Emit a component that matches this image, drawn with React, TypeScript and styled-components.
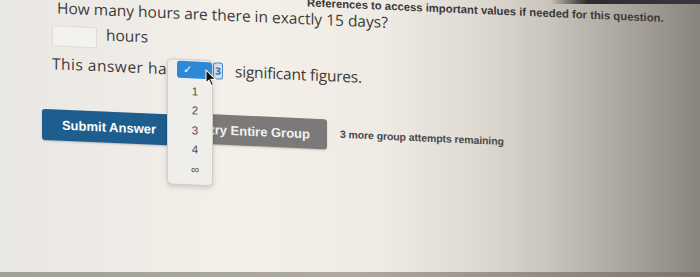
import React from 'react';
import styled, {createGlobalStyle} from 'styled-components';

const GlobalStyle = createGlobalStyle`
  html, body {
    margin: 0;
    padding: 0;
    width: 700px;
    height: 277px;
    overflow: hidden;
  }
  body {
    font-family: "Open Sans", "Liberation Sans", sans-serif;
  }
`;

const Screen = styled.div`
  width: 700px;
  height: 277px;
  overflow: hidden;
  display: flex;
  flex-direction: column;
  background: linear-gradient(90deg, #e9e7e3 0%, #efece7 18%, #f4f0e9 36%, #efebe4 55%, #dedad2 68%, #cbc6bd 78%, #aca79e 89%, #8a857c 100%);
`;

const TopBand = styled.div`
  height: 4px;
  display: flex;
  justify-content: flex-end;
`;

const TopBandDark = styled.div`
  width: 150px;
  background: linear-gradient(90deg, rgba(40, 38, 42, 0) 0%, #2f2c30 25%, #3a3640 100%);
`;

/* the photo is taken at an angle: rows fall to the right, verticals stay upright */
const Content = styled.div`
  flex: 1 1 auto;
  display: flex;
  flex-direction: column;
  padding-left: 52px;
  transform: skewY(2.5deg);
  transform-origin: 0 0;
  color: #3a3a3a;
`;

const Notice = styled.div`
  margin-top: -21px;
  padding-left: 255px;
  height: 13px;
  line-height: 13px;
  font-family: "Liberation Sans", sans-serif;
  font-size: 11.3px;
  font-weight: bold;
  color: #3a3a3a;
  white-space: nowrap;
`;

const Question = styled.div`
  margin-top: -1px;
  padding-left: 5px;
  line-height: 20px;
  font-size: 15.5px;
  white-space: nowrap;
`;

const AnswerRow = styled.div`
  display: flex;
  align-items: flex-start;
  gap: 9px;
  margin-top: 8px;
`;

const Input = styled.div`
  width: 45px;
  height: 21px;
  box-sizing: border-box;
  border: 1px solid #dedcd8;
  border-radius: 2px;
  background: #f4f2ee;
`;

const Unit = styled.span`
  margin-top: -4px;
  line-height: 22px;
  font-size: 15.5px;
`;

const SigRow = styled.div`
  display: flex;
  align-items: center;
  height: 22px;
  margin-top: 6px;
  line-height: 22px;
  font-size: 15.5px;
  white-space: nowrap;
`;

const Clip = styled.span`
  width: 121px;
  overflow: hidden;
  letter-spacing: 0.5px;
`;

const SelectWrap = styled.span`
  position: relative;
  display: inline-flex;
  align-items: center;
  gap: 1px;
  margin-left: 4px;
`;

const Select = styled.span`
  width: 35px;
  height: 17px;
  display: flex;
  align-items: center;
  padding-left: 6px;
  box-sizing: border-box;
  background: #2e88d9;
  border-radius: 3px;
  color: #fff;
  font-size: 11px;
  z-index: 2;
`;

const Badge = styled.span`
  width: 10px;
  height: 17px;
  box-sizing: border-box;
  display: flex;
  align-items: center;
  justify-content: center;
  border: 1px solid #4f88c6;
  border-radius: 3px;
  background: #cfe0f2;
  color: #2f68a8;
  font-size: 10px;
  font-weight: bold;
`;

const Tail = styled.span`
  margin-left: 12px;
  letter-spacing: -0.2px;
`;

const Menu = styled.div`
  position: absolute;
  left: -10px;
  top: -2px;
  width: 46px;
  height: 126px;
  box-sizing: border-box;
  padding: 22px 0 0 10px;
  display: flex;
  flex-direction: column;
  align-items: center;
  background: #f0eeea;
  border: 1px solid #d2cfca;
  border-radius: 5px;
  box-shadow: 0 2px 5px rgba(0, 0, 0, 0.16);
  z-index: 1;
`;

const MenuItem = styled.div`
  height: 19.5px;
  line-height: 19.5px;
  font-family: "Liberation Sans", sans-serif;
  font-size: 11.5px;
  color: #4e4e4e;
`;

const Cursor = styled.svg`
  position: absolute;
  left: 28px;
  top: 7px;
  z-index: 3;
`;

const ButtonRow = styled.div`
  display: flex;
  align-items: flex-start;
  margin-top: 33px;
  margin-left: -10px;
  font-family: "Liberation Sans", sans-serif;
`;

const Button = styled.div<{$tone: 'primary' | 'muted'}>`
  height: 31px;
  display: flex;
  align-items: center;
  justify-content: center;
  border-radius: 3px;
  font-size: 13px;
  font-weight: bold;
  color: ${p => (p.$tone === 'primary' ? '#fff' : '#f1f1f1')};
  background: ${p => (p.$tone === 'primary' ? '#1d5e8e' : '#7c7a78')};
  box-shadow: 0 1px 2px rgba(0, 0, 0, 0.2);
`;

const Submit = styled(Button)`
  width: 128px;
  margin-top: 2px;
  padding-left: 6px;
  box-sizing: border-box;
`;

const Retry = styled(Button)`
  width: 127px;
  height: 30px;
  margin-left: 30px;
  justify-content: flex-end;
  padding-right: 17px;
  box-sizing: border-box;
  overflow: hidden;
  white-space: nowrap;
`;

const Attempts = styled.span`
  align-self: center;
  margin: 0 0 5px 13px;
  font-size: 10.5px;
  font-weight: bold;
  letter-spacing: -0.1px;
  color: #484848;
`;

const BottomEdge = styled.div`
  height: 5px;
  background: linear-gradient(90deg, #a29e98 0%, #aeaaa3 50%, #7a756d 100%);
`;

export default function App() {
  return (
    <Screen>
      <GlobalStyle/>
      <TopBand><TopBandDark/></TopBand>
      <Content>
        <Notice>References to access important values if needed for this question.</Notice>
        <Question>How many hours are there in exactly 15 days?</Question>
        <AnswerRow>
          <Input/>
          <Unit>hours</Unit>
        </AnswerRow>
        <SigRow>
          <Clip>This answer has</Clip>
          <SelectWrap>
            <Select>✓</Select>
            <Badge>3</Badge>
            <Menu>
              {['1', '2', '3', '4', '∞'].map(v => <MenuItem key={v}>{v}</MenuItem>)}
            </Menu>
            <Cursor width="12" height="18" viewBox="0 0 12 18">
              <path d="M1 1 L1 14 L4 11 L6.5 16.5 L8.5 15.5 L6 10 L10.5 10 Z" fill="#111" stroke="#fff" strokeWidth="1"/>
            </Cursor>
          </SelectWrap>
          <Tail>significant figures.</Tail>
        </SigRow>
        <ButtonRow>
          <Submit $tone="primary">Submit Answer</Submit>
          <Retry $tone="muted">Retry Entire Group</Retry>
          <Attempts>3 more group attempts remaining</Attempts>
        </ButtonRow>
      </Content>
      <BottomEdge/>
    </Screen>
  );
}
